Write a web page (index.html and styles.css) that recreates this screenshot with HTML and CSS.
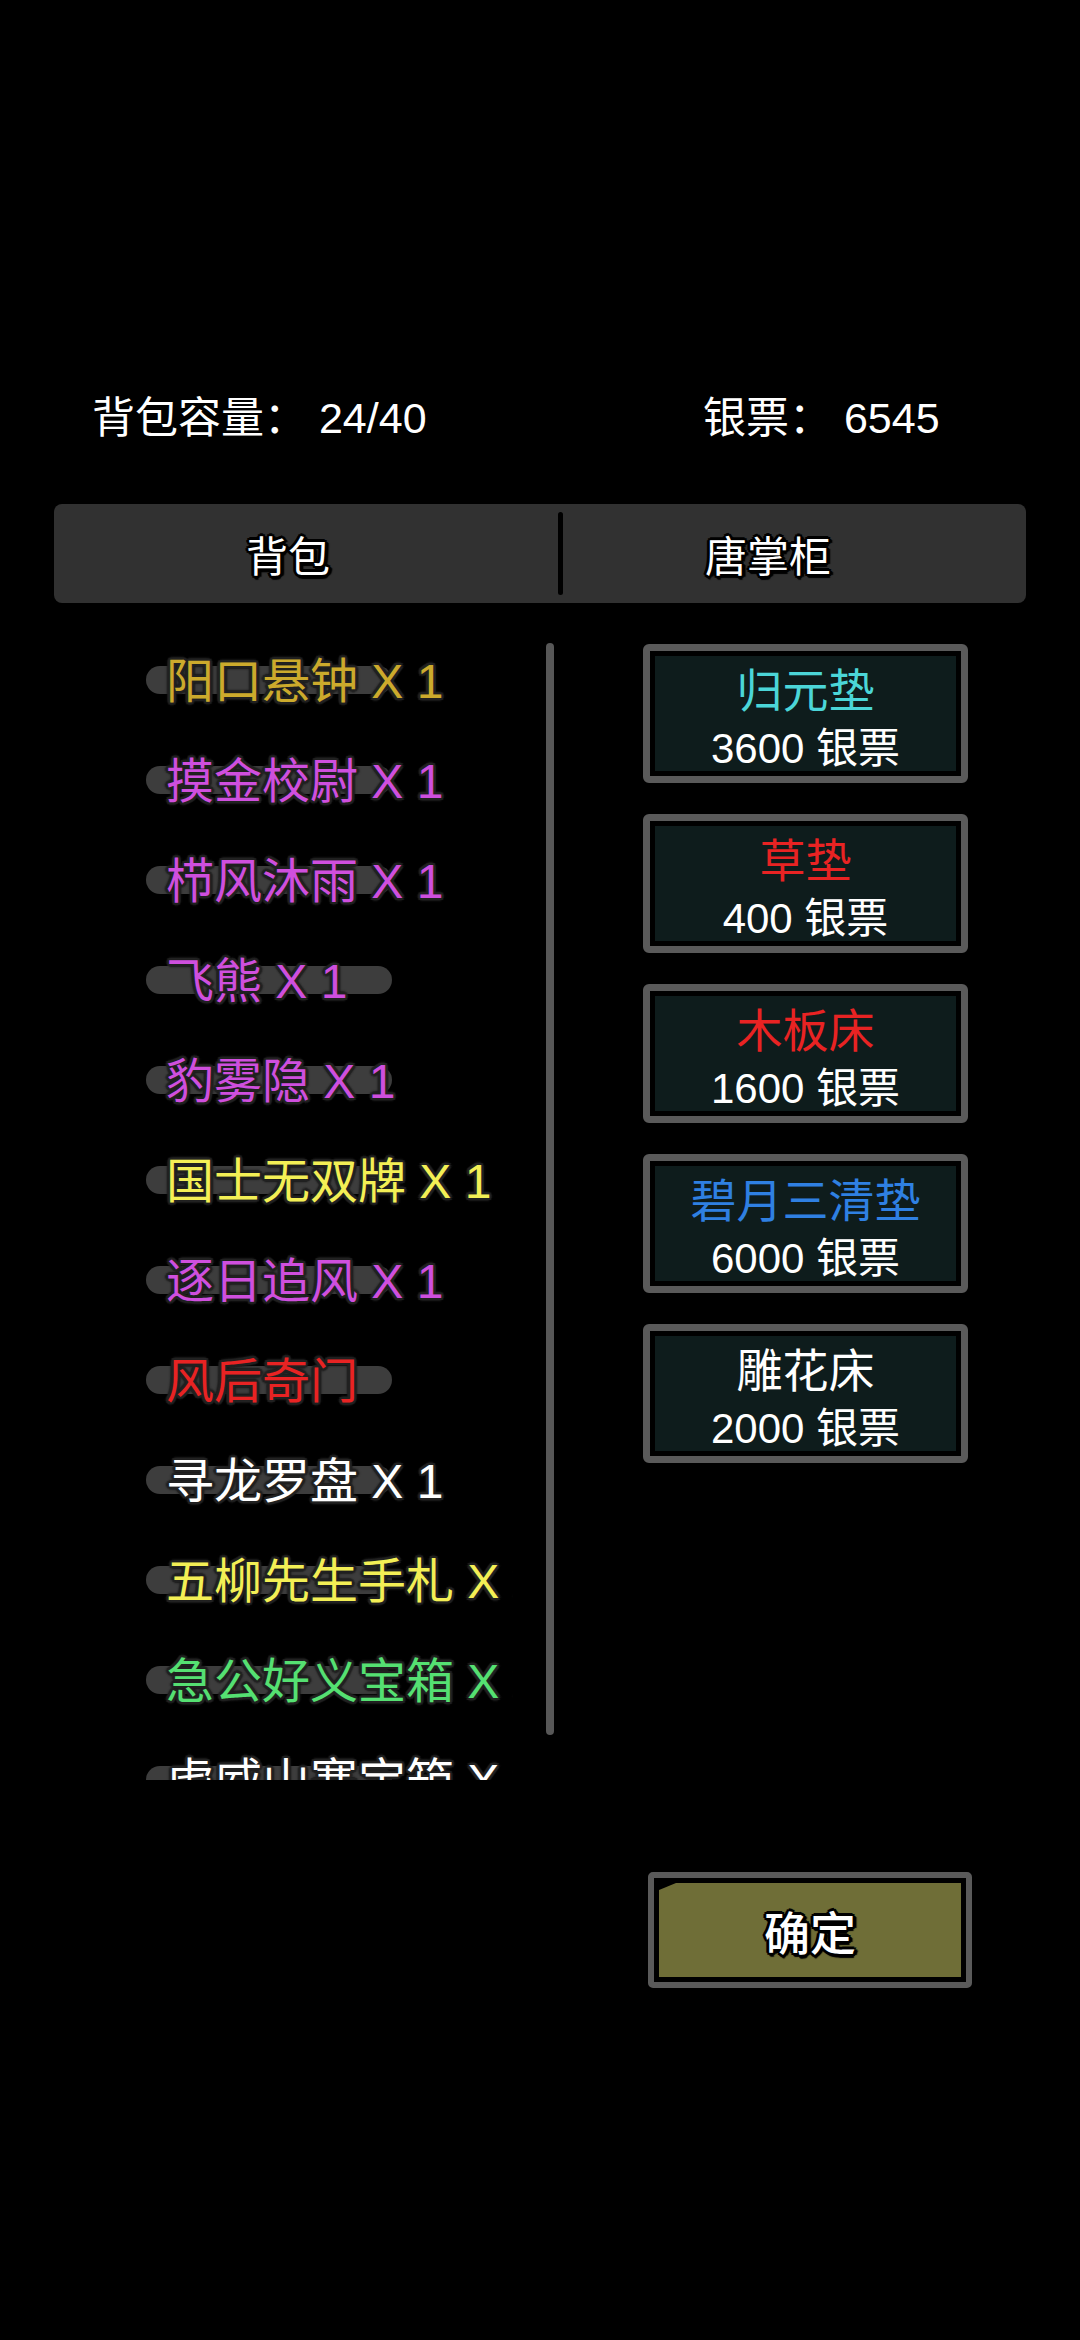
FILE: index.html
```html
<!DOCTYPE html>
<html lang="zh-CN">
<head>
<meta charset="utf-8">
<title>背包</title>
<link rel="stylesheet" href="styles.css">
</head>
<body>
<div class="page">
  <div class="header">
    <span class="cap">背包容量：&nbsp;24/40</span>
    <span class="money">银票：&nbsp;6545</span>
  </div>

  <div class="tabs">
    <div class="tab tab-left"><span class="tab-label">背包</span></div>
    <div class="divider"></div>
    <div class="tab tab-right"><span class="tab-label">唐掌柜</span></div>
  </div>

  <div class="main">
    <div class="bag">
      <div class="row c-gold"><span class="name">阳口悬钟 X 1</span></div>
      <div class="row c-purple"><span class="name">摸金校尉 X 1</span></div>
      <div class="row c-purple"><span class="name">栉风沐雨 X 1</span></div>
      <div class="row c-purple"><span class="name">飞熊 X 1</span></div>
      <div class="row c-purple"><span class="name">豹雾隐 X 1</span></div>
      <div class="row c-yellow"><span class="name">国士无双牌 X 1</span></div>
      <div class="row c-purple"><span class="name">逐日追风 X 1</span></div>
      <div class="row c-red"><span class="name">风后奇门</span></div>
      <div class="row c-white"><span class="name">寻龙罗盘 X 1</span></div>
      <div class="row c-yellow"><span class="name">五柳先生手札 X 1</span></div>
      <div class="row c-green"><span class="name">急公好义宝箱 X 1</span></div>
      <div class="row c-white"><span class="name">虎威山寨宝箱 X 1</span></div>
    </div>
    <div class="scrollbar"></div>
    <div class="shop">
      <div class="card"><div class="card-inner"><span class="title t-cyan">归元垫</span><span class="price">3600 银票</span></div></div>
      <div class="card"><div class="card-inner"><span class="title t-red">草垫</span><span class="price">400 银票</span></div></div>
      <div class="card"><div class="card-inner"><span class="title t-red">木板床</span><span class="price">1600 银票</span></div></div>
      <div class="card"><div class="card-inner"><span class="title t-blue">碧月三清垫</span><span class="price">6000 银票</span></div></div>
      <div class="card"><div class="card-inner"><span class="title t-white">雕花床</span><span class="price">2000 银票</span></div></div>
    </div>
  </div>

  <div class="confirm-wrap">
    <div class="confirm"><div class="confirm-fill"><span class="confirm-label">确定</span></div></div>
  </div>
</div>
</body>
</html>
```

FILE: styles.css
```css
html, body {
  margin: 0;
  padding: 0;
  background: #000;
}
body {
  width: 1080px;
  height: 2340px;
  overflow: hidden;
  font-family: "Liberation Sans", "Noto Sans CJK SC", sans-serif;
  color: #fff;
}
.page {
  padding-top: 394px;
}

/* header */
.header {
  display: flex;
  padding-left: 92px;
  height: 48px;
  line-height: 48px;
  font-size: 43px;
  color: #fff;
}
.cap {
  width: 611px;
}

/* tabs */
.tabs {
  display: flex;
  margin: 62px 54px 0;
  height: 99px;
  background: #313131;
  border-radius: 8px;
}
.tab {
  display: flex;
  align-items: center;
  justify-content: center;
}
.tab-left {
  width: 504px;
  padding-right: 36px;
  box-sizing: border-box;
}
.tab-right {
  flex: 1;
  padding-right: 53px;
  box-sizing: border-box;
}
.divider {
  width: 5px;
  margin: 8px 0;
  background: #000;
  border-radius: 3px;
}
.tab-label {
  font-size: 42px;
  color: #fff;
  text-shadow:
    3px 0 0 #000, -3px 0 0 #000, 0 3px 0 #000, 0 -3px 0 #000,
    2px 2px 0 #000, -2px 2px 0 #000, 2px -2px 0 #000, -2px -2px 0 #000,
    4px 1px 1px #000, 1px 4px 1px #000;
}

/* main */
.main {
  display: flex;
  margin-top: 27px;
}
.bag {
  margin-left: 140px;
  width: 373px;
  height: 1150px;
  overflow: hidden;
}
.row {
  position: relative;
  height: 100px;
  display: flex;
  align-items: center;
}
.row::before {
  content: "";
  position: absolute;
  left: 6px;
  top: 36px;
  width: 246px;
  height: 28px;
  border-radius: 14px;
  background: #3d3d3d;
}
.name {
  position: relative;
  top: 2px;
  padding-left: 26px;
  font-size: 48px;
  line-height: 60px;
  white-space: nowrap;
  text-shadow:
    2px 0 1px #222, -2px 0 1px #222, 0 2px 1px #222, 0 -2px 1px #222,
    2px 2px 1px #222, -2px 2px 1px #222, 2px -2px 1px #222, -2px -2px 1px #222,
    3px 0 2px #1a1a1a, -3px 0 2px #1a1a1a, 0 3px 2px #1a1a1a, 0 -3px 2px #1a1a1a;
}
.c-gold { color: #ccaa2c; }
.c-purple { color: #cf4fde; }
.c-yellow { color: #f3ef55; }
.c-red { color: #e82323; }
.c-white { color: #ffffff; }
.c-green { color: #55e072; }

.scrollbar {
  margin-left: 33px;
  margin-top: 13px;
  width: 8px;
  height: 1092px;
  border-radius: 4px;
  background: #575757;
}

/* shop */
.shop {
  margin-left: 89px;
  margin-top: 14px;
  width: 325px;
  display: flex;
  flex-direction: column;
  gap: 31px;
}
.card {
  height: 139px;
  box-sizing: border-box;
  border: 7px solid #5a5a5a;
  border-radius: 6px;
  padding: 5px;
  background: #000;
}
.card-inner {
  height: 115px;
  background: #0e1c1c;
  display: flex;
  flex-direction: column;
  align-items: center;
  overflow: hidden;
}
.title {
  margin-top: 9px;
  font-size: 46px;
  line-height: 52px;
}
.price {
  margin-top: 11px;
  font-size: 42px;
  line-height: 42px;
  color: #fff;
}
.t-cyan { color: #4bd6d8; }
.t-red { color: #e82323; }
.t-blue { color: #2f80e2; }
.t-white { color: #ffffff; }

/* confirm */
.confirm-wrap {
  margin-top: 92px;
  padding-left: 648px;
}
.confirm {
  width: 324px;
  height: 116px;
  box-sizing: border-box;
  border: 6px solid #5a5a5a;
  border-radius: 5px;
  padding: 5px;
  background: #000;
}
.confirm-fill {
  height: 100%;
  background: #6f6e37;
  clip-path: polygon(0 7px, 17px 0, 100% 0, 100% 100%, 0 100%);
  display: flex;
  align-items: center;
  justify-content: center;
}
.confirm-label {
  font-size: 46px;
  font-weight: 500;
  color: #fff;
  text-shadow:
    3px 0 0 #000, -3px 0 0 #000, 0 3px 0 #000, 0 -3px 0 #000,
    2px 2px 0 #000, -2px 2px 0 #000, 2px -2px 0 #000, -2px -2px 0 #000,
    4px 1px 1px #000, 1px 4px 1px #000;
}
```
